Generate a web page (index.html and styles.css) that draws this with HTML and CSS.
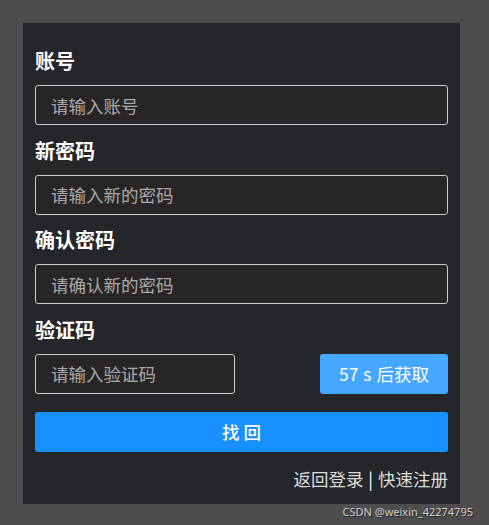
FILE: index.html
```html
<!DOCTYPE html>
<html lang="zh">
<head>
<meta charset="utf-8">
<link rel="stylesheet" href="styles.css">
</head>
<body>
<div class="page">
  <form class="panel">
    <div class="field">
      <label class="label">账号</label>
      <input class="input" type="text" placeholder="请输入账号">
    </div>
    <div class="field">
      <label class="label">新密码</label>
      <input class="input" type="text" placeholder="请输入新的密码">
    </div>
    <div class="field">
      <label class="label">确认密码</label>
      <input class="input" type="text" placeholder="请确认新的密码">
    </div>
    <div class="field">
      <label class="label">验证码</label>
      <div class="code-row">
        <input class="input code-input" type="text" placeholder="请输入验证码">
        <button class="code-btn" type="button">57 s 后获取</button>
      </div>
    </div>
    <button class="submit" type="button">找 回</button>
    <div class="links"><a class="link">返回登录</a> <span class="sep">|</span> <a class="link">快速注册</a></div>
  </form>
  <div class="watermark">CSDN @weixin_42274795</div>
</div>
</body>
</html>
```
FILE: styles.css
```css
html, body {
  margin: 0;
  padding: 0;
  background: #4d4d4d;
  font-family: "Noto Sans CJK SC", "Noto Sans", sans-serif;
}
.page {
  position: relative;
  width: 489px;
  height: 525px;
  padding: 23px 0 0 23px;
  box-sizing: border-box;
}
.panel {
  width: 437px;
  height: 481px;
  box-sizing: border-box;
  background: #25262a;
  padding: 26px 12px 0 12px;
  display: flex;
  flex-direction: column;
}
.field {
  display: flex;
  flex-direction: column;
  margin-bottom: 13.67px;
}
.label {
  color: #ffffff;
  font-size: 20px;
  font-weight: 700;
  line-height: 24px;
  height: 24px;
  margin-bottom: 12px;
}
.input {
  height: 40px;
  box-sizing: border-box;
  border: 1px solid #c9c9c9;
  border-radius: 3px;
  background: #282526;
  padding: 0 15px;
  font-family: inherit;
  font-size: 17.5px;
  color: #ddd;
  outline: none;
  width: 100%;
}
.input::placeholder {
  color: #a9a9a9;
}
.code-row {
  display: flex;
  justify-content: space-between;
}
.code-input {
  width: 200px;
}
.code-btn {
  width: 128px;
  height: 40px;
  border: none;
  border-radius: 3px;
  background: #45a7ff;
  color: #ffffff;
  font-family: inherit;
  font-size: 17.5px;
  padding: 0;
  word-spacing: 1px;
}
.submit {
  margin-top: 4px;
  height: 40px;
  width: 100%;
  border: none;
  border-radius: 3px;
  background: #1890ff;
  color: #ffffff;
  font-family: inherit;
  font-size: 17.5px;
  font-weight: 500;
  padding: 0;
}
.links {
  margin-top: 15px;
  text-align: right;
  font-size: 17.5px;
  line-height: 24px;
  color: #dcdcdc;
  word-spacing: 1px;
}
.sep {
  color: #ffffff;
}
.watermark {
  position: absolute;
  right: 16px;
  bottom: 6px;
  font-family: "Noto Sans", sans-serif;
  font-size: 11px;
  color: #cfcfcf;
  text-shadow: 1px 1px 1px #222;
}
```
